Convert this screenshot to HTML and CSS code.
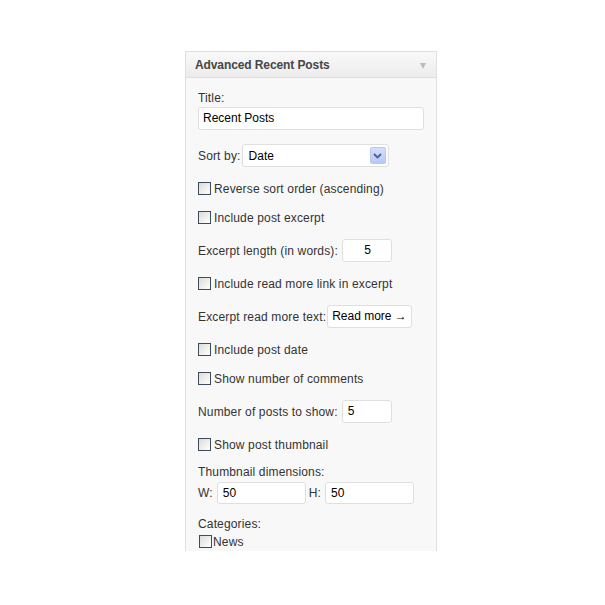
FILE: index.html
```html
<!DOCTYPE html>
<html>
<head>
<meta charset="utf-8">
<link rel="stylesheet" href="styles.css">
<title>Advanced Recent Posts</title>
</head>
<body>
<div class="widget">
  <div class="widget-top">
    <h3 class="widget-title">Advanced Recent Posts</h3>
    <span class="toggle"></span>
  </div>
  <div class="widget-inside">
    <div class="field">
      <label class="lbl">Title:</label>
      <div class="input full">Recent Posts</div>
    </div>

    <div class="row sort-row">
      <span>Sort by:</span>
      <div class="select"><span class="sel-text">Date</span><span class="sel-btn"><svg width="9" height="6" viewBox="0 0 9 6"><path d="M1 1 L4.5 4.5 L8 1" fill="none" stroke="#4d6185" stroke-width="1.8"/></svg></span></div>
    </div>

    <div class="check"><span class="box"></span><span>Reverse sort order (ascending)</span></div>
    <div class="check"><span class="box"></span><span>Include post excerpt</span></div>

    <div class="row">
      <span>Excerpt length (in words):</span>
      <div class="input num center">5</div>
    </div>

    <div class="check"><span class="box"></span><span>Include read more link in excerpt</span></div>

    <div class="row tight-row">
      <span>Excerpt read more text:</span>
      <div class="input more">Read more →</div>
    </div>

    <div class="check"><span class="box"></span><span>Include post date</span></div>
    <div class="check"><span class="box"></span><span>Show number of comments</span></div>

    <div class="row">
      <span>Number of posts to show:</span>
      <div class="input num">5</div>
    </div>

    <div class="check"><span class="box"></span><span>Show post thumbnail</span></div>

    <div class="field dims-field">
      <label class="lbl">Thumbnail dimensions:</label>
      <div class="dims">
        <span>W:</span><div class="input dim">50</div>
        <span class="h-lbl">H:</span><div class="input dim">50</div>
      </div>
    </div>

    <div class="field cats">
      <label class="lbl">Categories:</label>
      <div class="check cat"><span class="box"></span><span>News</span></div>
    </div>
  </div>
</div>
</body>
</html>
```

FILE: styles.css
```css
html, body {
  margin: 0;
  padding: 0;
  background: #ffffff;
}

body {
  font-family: "Liberation Sans", Arial, sans-serif;
  font-size: 12px;
  color: #333333;
}

.widget {
  margin: 51px 0 0 185px;
  width: 250px;
  height: 499px;
  border: 1px solid #dfdfdf;
  border-bottom: none;
  background: #f8f8f8;
  overflow: hidden;
}

.widget-top {
  height: 25px;
  border-bottom: 1px solid #dfdfdf;
  background: linear-gradient(to bottom, #f9f9f9, #ececec);
  display: flex;
  align-items: center;
  justify-content: space-between;
  padding: 0 10px 0 9px;
}

.widget-title {
  margin: 0;
  font-size: 12px;
  font-weight: bold;
  color: #464646;
  letter-spacing: -0.1px;
}

.toggle {
  width: 0;
  height: 0;
  border-left: 3.5px solid transparent;
  border-right: 3.5px solid transparent;
  border-top: 6px solid #bbbbbb;
  margin-top: 3px;
}

.widget-inside {
  padding: 12px 12px 0 12px;
  display: flex;
  flex-direction: column;
  gap: 14px;
  letter-spacing: 0.15px;
}

.field {
  display: flex;
  flex-direction: column;
  gap: 1px;
}

.lbl {
  line-height: 16px;
  display: block;
}

.input {
  box-sizing: border-box;
  height: 23px;
  border: 1px solid #dfdfdf;
  border-radius: 3px;
  background: #ffffff;
  color: #000000;
  line-height: 21px;
  padding: 0 4px;
  white-space: nowrap;
  letter-spacing: 0;
}

.input.full {
  width: 226px;
}

.row {
  display: flex;
  align-items: center;
  gap: 4px;
  height: 23px;
}

.sort-row {
  gap: 1px;
}

.tight-row {
  gap: 1px;
}

.input.num {
  width: 50px;
  padding-left: 5px;
}

.input.center {
  text-align: center;
}

.input.more {
  width: 85px;
  padding-left: 4px;
}

.select {
  box-sizing: border-box;
  width: 147px;
  height: 23px;
  border: 1px solid #dfdfdf;
  border-radius: 3px;
  background: #ffffff;
  color: #000000;
  display: flex;
  align-items: center;
  justify-content: space-between;
  padding: 0 2px 0 6px;
  letter-spacing: 0;
}

.sel-btn {
  width: 16px;
  height: 17px;
  box-sizing: border-box;
  border: 1px solid #b9c8f0;
  border-radius: 2px;
  background: linear-gradient(to bottom, #d2dffd, #b7c9f7);
  display: flex;
  align-items: center;
  justify-content: center;
}

.check {
  display: flex;
  align-items: center;
  gap: 3px;
  height: 15px;
}

.box {
  box-sizing: border-box;
  width: 13px;
  height: 13px;
  border: 1px solid #3c4c5e;
  background: linear-gradient(135deg, #dcdcd7, #ffffff);
  flex: none;
}

.dims-field {
  margin-top: -2px;
}

.dims {
  display: flex;
  align-items: center;
  height: 23px;
}

.input.dim {
  width: 89px;
  margin-left: 4px;
  padding-left: 5px;
  height: 22px;
  line-height: 20px;
}

.h-lbl {
  margin-left: 3px;
}

.cats {
  gap: 2px;
  margin-top: -2px;
}

.check.cat {
  gap: 1px;
  padding-left: 1px;
}
```
